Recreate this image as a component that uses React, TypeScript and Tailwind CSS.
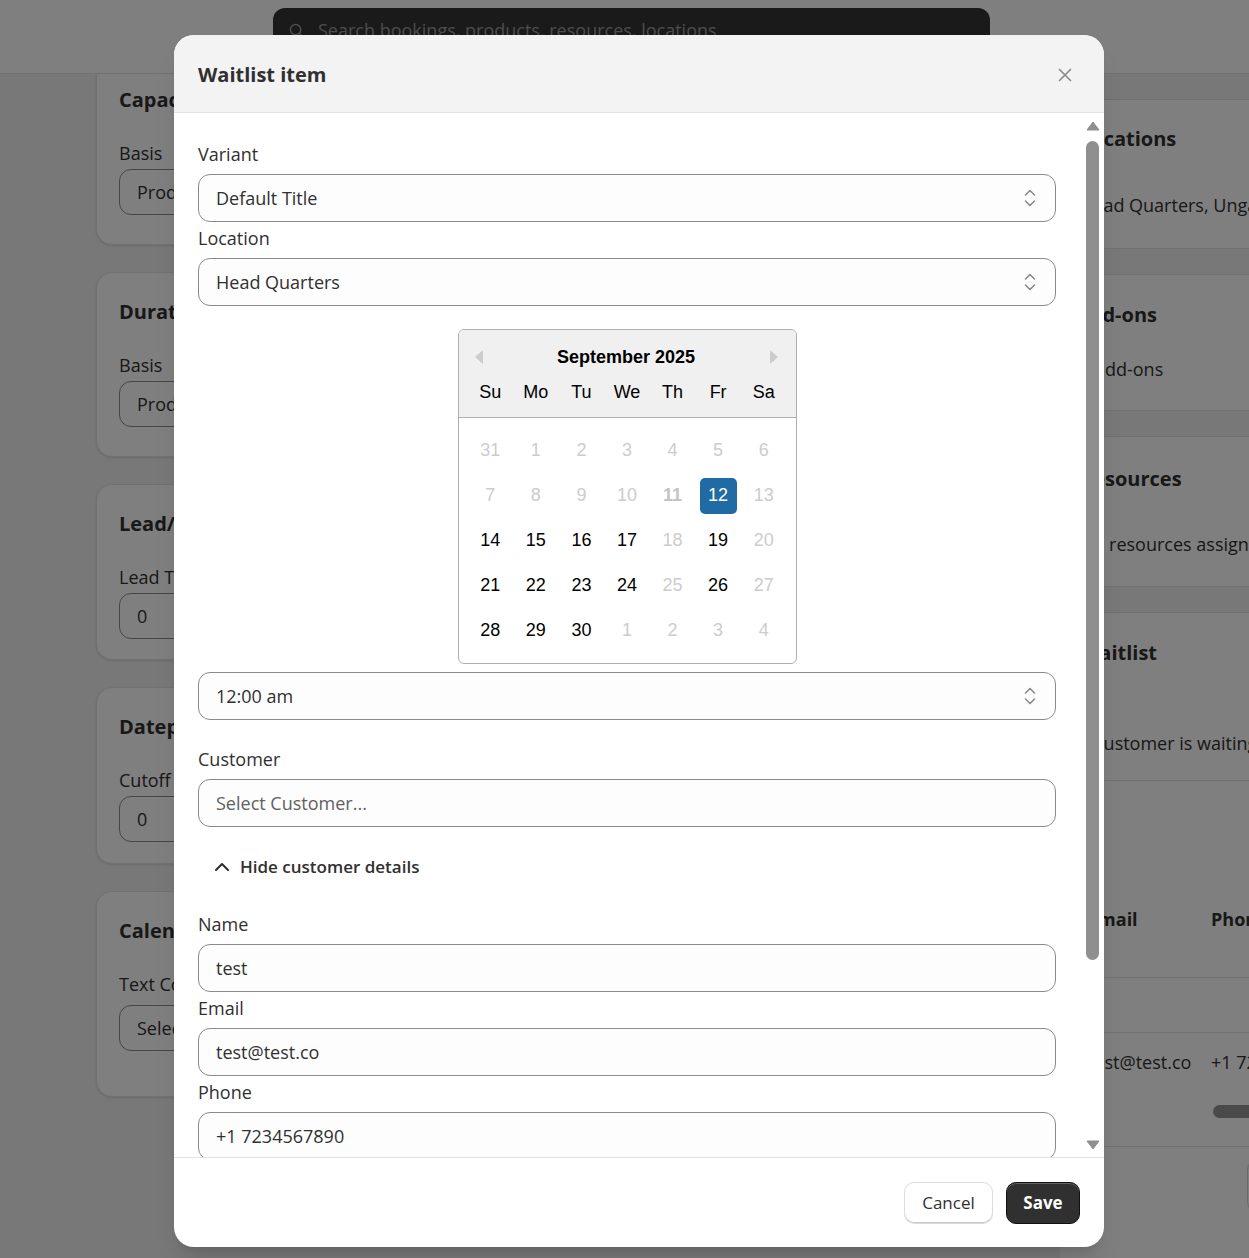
import type { ReactNode } from "react";

type DayKind = "muted" | "normal" | "today" | "selected";

const weekDays = ["Su", "Mo", "Tu", "We", "Th", "Fr", "Sa"];

const weeks: [string, DayKind][][] = [
  [["31", "muted"], ["1", "muted"], ["2", "muted"], ["3", "muted"], ["4", "muted"], ["5", "muted"], ["6", "muted"]],
  [["7", "muted"], ["8", "muted"], ["9", "muted"], ["10", "muted"], ["11", "today"], ["12", "selected"], ["13", "muted"]],
  [["14", "normal"], ["15", "normal"], ["16", "normal"], ["17", "normal"], ["18", "muted"], ["19", "normal"], ["20", "muted"]],
  [["21", "normal"], ["22", "normal"], ["23", "normal"], ["24", "normal"], ["25", "muted"], ["26", "normal"], ["27", "muted"]],
  [["28", "normal"], ["29", "normal"], ["30", "normal"], ["1", "muted"], ["2", "muted"], ["3", "muted"], ["4", "muted"]],
];

const leftCards = [
  { title: "Capacity", label: "Basis", value: "Product", height: "h-[185px]", gap: "mt-1" },
  { title: "Duration", label: "Basis", value: "Product", height: "h-[185px]", gap: "mt-1" },
  { title: "Lead/Lag Time", label: "Lead Time", value: "0", height: "h-[176px]", gap: "mt-1" },
  { title: "Datepicker", label: "Cutoff", value: "0", height: "h-[177px]", gap: "mt-1" },
  { title: "Calendar", label: "Text Color", value: "Select", height: "h-[206px]", gap: "mt-[9px]" },
];

function SelectorIcon() {
  return (
    <svg width="12" height="20" viewBox="0 0 12 20" fill="none" stroke="#8a8a8a" strokeWidth="1.6" strokeLinecap="round" strokeLinejoin="round">
      <path d="M1.5 7 6 2.5 10.5 7" />
      <path d="M1.5 13 6 17.5 10.5 13" />
    </svg>
  );
}

function Box({ children, select, muted }: { children: ReactNode; select?: boolean; muted?: boolean }) {
  return (
    <div className={`flex h-12 items-center justify-between rounded-xl border border-[#8a8a8a] bg-[#fdfdfd] pl-[17px] pr-[19px] text-[18px] ${muted ? "text-[#616161]" : "text-[#303030]"}`}>
      <span>{children}</span>
      {select && <SelectorIcon />}
    </div>
  );
}

function Field({ label, children, className = "" }: { label: string; children: ReactNode; className?: string }) {
  return (
    <div className={className}>
      <div className="h-6 text-[18px] leading-6 text-[#303030]">{label}</div>
      <div className="mt-2">{children}</div>
    </div>
  );
}

function DatePicker() {
  return (
    <div className="w-[339px] overflow-hidden rounded-[6px] border border-[#aeaeae] bg-white font-['Liberation_Sans',Arial,sans-serif] text-black">
      <div className="border-b border-[#aeaeae] bg-[#f0f0f0] pt-[16px]">
        <div className="flex h-[22px] items-center pl-[16px] pr-[18px]">
          <svg width="8" height="14" viewBox="0 0 8 14">
            <polygon points="8,0 8,14 0,7" fill="#cccccc" />
          </svg>
          <div className="flex-1 text-center text-[18px] font-bold leading-[22px]">September 2025</div>
          <svg width="8" height="14" viewBox="0 0 8 14">
            <polygon points="0,0 0,14 8,7" fill="#cccccc" />
          </svg>
        </div>
        <div className="grid h-[49px] grid-cols-7 items-center px-[9px] text-center text-[18px]">
          {weekDays.map((d) => (
            <span key={d}>{d}</span>
          ))}
        </div>
      </div>
      <div className="px-[9px] pb-[10px] pt-[10px]">
        {weeks.map((week, i) => (
          <div className="grid h-[45px] grid-cols-7 items-center" key={i}>
            {week.map(([day, kind], j) => (
              <div className="flex justify-center" key={j}>
                <span
                  className={`flex h-[36px] w-[37px] items-center justify-center rounded-[5px] text-[18px] ${
                    kind === "selected"
                      ? "bg-[#216ba5] text-white"
                      : kind === "normal"
                        ? "text-black"
                        : kind === "today"
                          ? "font-bold text-[#c4c4c4]"
                          : "text-[#cccccc]"
                  }`}
                >
                  {day}
                </span>
              </div>
            ))}
          </div>
        ))}
      </div>
    </div>
  );
}

function BackgroundPage() {
  return (
    <>
      <header className="absolute inset-x-0 top-0 z-10 h-[74px] border-b border-[#e3e3e3] bg-white">
        <div className="ml-[273px] mt-2 flex h-[44px] w-[717px] items-center gap-[14px] rounded-xl bg-[#343434] pl-4 text-[18px] text-[#9a9a9a]">
          <svg width="15" height="15" viewBox="0 0 16 16" fill="none" stroke="#9a9a9a" strokeWidth="1.6">
            <circle cx="7" cy="7" r="5.5" />
            <path d="m11 11 4 4" />
          </svg>
          <span>Search bookings, products, resources, locations</span>
        </div>
      </header>
      <main className="flex pt-[60px]">
        <div className="ml-[96px] flex w-[470px] shrink-0 flex-col gap-[27px]">
          {leftCards.map((card) => (
            <section className={`${card.height} rounded-2xl border border-[#e3e3e3] bg-white px-[22px] pt-[27px] shadow-sm`} key={card.title}>
              <h2 className="h-6 text-[20px] font-bold leading-6">{card.title}</h2>
              <div className="mt-[29px] h-6 text-[18px] leading-6">{card.label}</div>
              <div className={`${card.gap} flex h-[46px] items-center rounded-xl border border-[#8a8a8a] pl-[17px] text-[18px]`}>{card.value}</div>
            </section>
          ))}
        </div>
        <div className="ml-[494px] flex w-[520px] shrink-0 flex-col gap-[25px] pt-[39px]">
          <section className="h-[150px] rounded-l-2xl border-y border-[#e3e3e3] bg-white pl-5 pt-[27px]">
            <h2 className="h-6 text-[20px] font-bold leading-6">Locations</h2>
            <p className="mt-[42px] h-6 text-[18px] leading-6">Head Quarters, Ungasan, Bali</p>
          </section>
          <section className="h-[137px] rounded-l-2xl border-y border-[#e3e3e3] bg-white pl-5 pt-[28px]">
            <h2 className="-ml-[4px] h-6 text-[20px] font-bold leading-6">Add-ons</h2>
            <p className="mt-[30px] h-6 text-[18px] leading-6">0 add-ons</p>
          </section>
          <section className="h-[151px] rounded-l-2xl border-y border-[#e3e3e3] bg-white pl-5 pt-[30px]">
            <h2 className="h-6 text-[20px] font-bold leading-6">Resources</h2>
            <p className="mt-[41px] h-6 text-[18px] leading-6">No resources assigned</p>
          </section>
          <section className="h-[700px] rounded-l-2xl border-y border-[#e3e3e3] bg-white pt-[28px]">
            <h2 className="h-6 pl-5 text-[20px] font-bold leading-6">Waitlist</h2>
            <p className="mt-[66px] h-6 pl-5 text-[18px] leading-6">1 customer is waiting</p>
            <div className="mt-[25px] border-t border-[#e3e3e3]">
              <div className="flex h-[197px] border-b border-[#e3e3e3] pl-[28px] pt-[126px] text-[18px] font-bold leading-6">
                <span className="w-[123px]">Email</span>
                <span>Phone</span>
              </div>
              <div className="h-[55px] border-b border-[#e3e3e3]" />
              <div className="flex h-[114px] border-b border-[#e3e3e3] pl-[28px] pt-[17px] text-[18px] leading-6">
                <span className="w-[123px]">test@test.co</span>
                <div className="flex flex-col">
                  <span>+1 7234567890</span>
                  <span className="ml-[2px] mt-[31px] h-[13px] w-[90px] rounded-full bg-[#949494]" />
                </div>
              </div>
              <div className="ml-[187px] mt-[11px] h-[56px] w-[90px] rounded-xl border border-[#d4d4d4] bg-white" />
            </div>
          </section>
        </div>
      </main>
    </>
  );
}

export default function App() {
  return (
    <div className="relative h-[1258px] w-[1249px] overflow-hidden bg-[#f1f1f1] font-['Open_Sans',sans-serif] text-[#303030]">
      <BackgroundPage />
      <div className="absolute inset-0 z-20 bg-black/50" />

      <div className="absolute left-[174px] top-[35px] z-30 flex h-[1212px] w-[930px] flex-col overflow-hidden rounded-[20px] bg-white shadow-xl">
        <div className="flex h-[78px] shrink-0 items-center justify-between border-b border-[#e3e3e3] bg-[#f3f3f3] pl-6 pr-8 pt-[2px]">
          <h1 className="text-[20px] font-bold text-[#303030]">Waitlist item</h1>
          <svg width="14" height="14" viewBox="0 0 14 14" fill="none" stroke="#8a8a8a" strokeWidth="1.7" strokeLinecap="round">
            <path d="M1.5 1.5 12.5 12.5M12.5 1.5 1.5 12.5" />
          </svg>
        </div>

        <div className="flex min-h-0 flex-1">
          <div className="min-w-0 flex-1 overflow-hidden pl-6 pr-7 pt-[29px]">
            <Field label="Variant">
              <Box select>Default Title</Box>
            </Field>
            <Field label="Location" className="mt-1">
              <Box select>Head Quarters</Box>
            </Field>
            <div className="mt-[23px] flex justify-center">
              <DatePicker />
            </div>
            <div className="mt-2">
              <Box select>12:00 am</Box>
            </div>
            <Field label="Customer" className="mt-[27px]">
              <Box muted>Select Customer...</Box>
            </Field>
            <button className="mt-[28px] flex h-6 items-center gap-[10px] pl-4 text-[17px] font-semibold text-[#303030]">
              <svg width="16" height="10" viewBox="0 0 16 10" fill="none" stroke="#303030" strokeWidth="2" strokeLinecap="round" strokeLinejoin="round">
                <path d="M2 8 8 2l6 6" />
              </svg>
              Hide customer details
            </button>
            <Field label="Name" className="mt-[33px]">
              <Box>test</Box>
            </Field>
            <Field label="Email" className="mt-1">
              <Box>test@test.co</Box>
            </Field>
            <Field label="Phone" className="mt-1">
              <Box>+1 7234567890</Box>
            </Field>
          </div>

          <div className="mr-[3px] flex w-[17px] flex-col items-center pb-[7px] pt-2">
            <svg width="14" height="10" viewBox="0 0 14 10">
              <polygon points="7,1 13,9 1,9" fill="#8f8f8f" stroke="#8f8f8f" strokeLinejoin="round" />
            </svg>
            <div className="mt-[10px] h-[819px] w-[13px] rounded-full bg-[#8f8f8f]" />
            <div className="flex-1" />
            <svg width="14" height="10" viewBox="0 0 14 10">
              <polygon points="1,1 13,1 7,9" fill="#8f8f8f" stroke="#8f8f8f" strokeLinejoin="round" />
            </svg>
          </div>
        </div>

        <div className="flex h-[90px] shrink-0 items-center justify-end gap-[13px] border-t border-[#e3e3e3] pr-6">
          <button className="h-[42px] w-[89px] rounded-[10px] border border-[#dcdcdc] bg-white text-[17px] font-medium text-[#303030] shadow-[inset_0_-1px_0_#c8c8c8]">
            Cancel
          </button>
          <button className="h-[42px] w-[74px] rounded-[10px] border border-[#111111] bg-[#303030] text-[17px] font-bold text-white shadow-[inset_0_1px_0_rgba(255,255,255,0.25)]">
            Save
          </button>
        </div>
      </div>
    </div>
  );
}
